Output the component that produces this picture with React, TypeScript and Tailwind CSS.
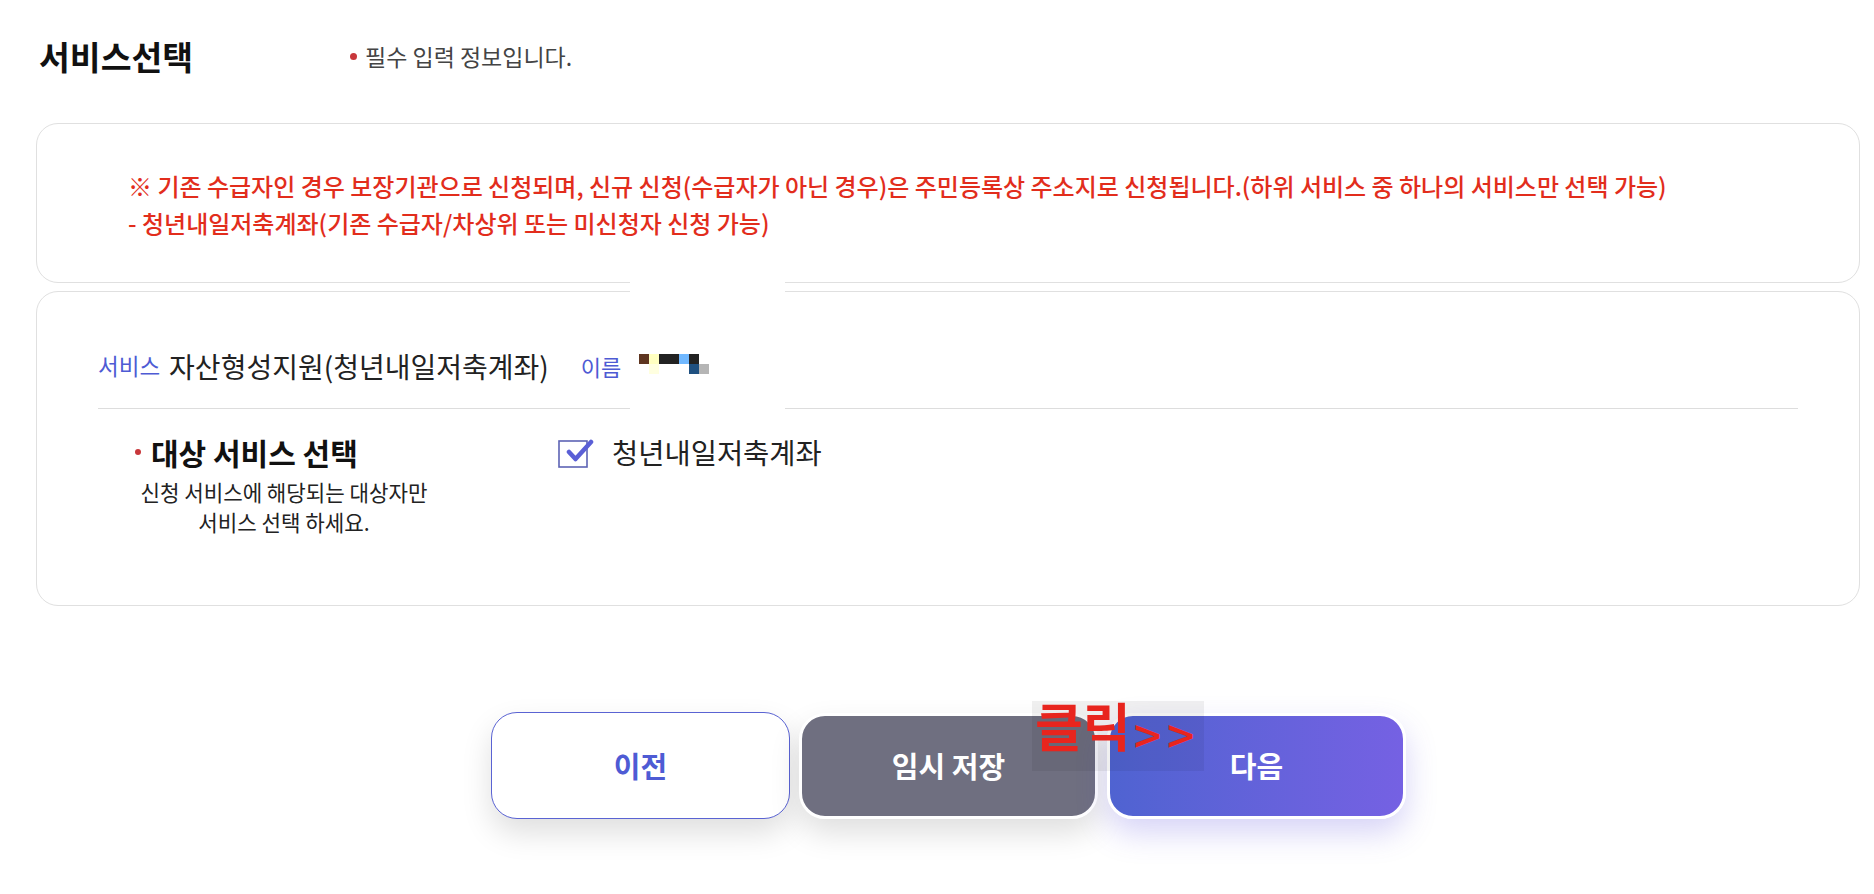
import React from 'react';

const pixels: { x: number; y: number; c: string }[] = [
  { x: 0, y: 0, c: '#5e3520' },
  { x: 10, y: 0, c: '#ffffc0' },
  { x: 20, y: 0, c: '#222222' },
  { x: 30, y: 0, c: '#222222' },
  { x: 40, y: 0, c: '#70b8ff' },
  { x: 50, y: 0, c: '#222222' },
  { x: 10, y: 10, c: '#ffffe0' },
  { x: 50, y: 10, c: '#1f5080' },
  { x: 60, y: 10, c: '#b5b5b5' },
];

const CheckIcon: React.FC = () => (
  <svg width="36" height="32" viewBox="0 0 36 32" className="shrink-0">
    <rect x="1" y="5" width="28" height="26" fill="white" stroke="#5d63b5" strokeWidth="1.6" />
    <path d="M11 16 L17.5 23 L33 6" fill="none" stroke="#5a5fd6" strokeWidth="4.5" strokeLinecap="round" strokeLinejoin="round" />
  </svg>
);

const App: React.FC = () => {
  return (
    <div className="relative w-[1874px] h-[894px] bg-white overflow-hidden font-['Noto_Sans_CJK_KR',sans-serif] text-[#222]">
      {/* header */}
      <div className="flex items-center h-[40px] mt-[36px] pl-[39px]">
        <h2 className="w-[311px] text-[33.5px] font-bold text-[#111]">서비스선택</h2>
        <span className="w-[7px] h-[7px] rounded-full bg-[#c8373b] mr-[8px]" />
        <span className="text-[23px] text-[#444]">필수 입력 정보입니다.</span>
      </div>

      {/* notice card */}
      <div className="ml-[36px] mt-[47px] w-[1824px] h-[160px] border border-[#e0e0e0] rounded-[22px] pl-[91px] pt-[43px] text-[#e22d1c] text-[24px] font-medium leading-[37px]">
        <p>※ 기존 수급자인 경우 보장기관으로 신청되며, 신규 신청(수급자가 아닌 경우)은 주민등록상 주소지로 신청됩니다.(하위 서비스 중 하나의 서비스만 선택 가능)</p>
        <p>- 청년내일저축계좌(기존 수급자/차상위 또는 미신청자 신청 가능)</p>
      </div>

      {/* service card */}
      <div className="ml-[36px] mt-[8px] w-[1824px] h-[315px] border border-[#e0e0e0] rounded-[22px] px-[61px] pt-[54px]">
        <div className="flex items-center h-[40px]">
          <span className="text-[22.5px] text-[#4e5bd4]">서비스</span>
          <span className="ml-[9px] text-[28px] text-[#222]">자산형성지원(청년내일저축계좌)</span>
          <span className="ml-[32px] text-[22px] text-[#4e5bd4]">이름</span>
          <span className="relative z-10 ml-[18px] w-[70px] h-[20px] mt-[-4px]">
            {pixels.map((p, i) => (
              <span
                key={i}
                className="absolute w-[10px] h-[10px]"
                style={{ left: p.x, top: p.y, background: p.c }}
              />
            ))}
          </span>
        </div>
        <div className="mt-[22px] h-px bg-[#dddddd]" />
        <div className="flex">
          <div className="w-[460px]">
            <div className="flex items-center mt-[25px] pl-[37px] h-[36px]">
              <span className="w-[6px] h-[6px] rounded-full bg-[#c8373b] mr-[10px]" />
              <span className="text-[30px] font-bold text-[#111]">대상 서비스 선택</span>
            </div>
            <p className="w-[372px] mt-[7px] text-center text-[21.2px] leading-[30px] text-[#222]">
              신청 서비스에 해당되는 대상자만
              <br />
              서비스 선택 하세요.
            </p>
          </div>
          <div className="flex items-center mt-[25px] h-[36px]">
            <CheckIcon />
            <span className="ml-[18px] text-[28.5px] text-[#222]">청년내일저축계좌</span>
          </div>
        </div>
      </div>

      {/* buttons */}
      <div className="flex items-end gap-[9px] pl-[491px] mt-[106px]">
        <button className="w-[299px] h-[107px] rounded-[26px] border border-[#5a63d3] bg-white text-[#4e5bd4] text-[29px] font-bold shadow-[0_14px_30px_rgba(0,0,0,0.13)]">
          이전
        </button>
        <button className="w-[299px] h-[106px] rounded-[26px] border-[3px] border-white bg-[#6f6f80] text-white text-[29px] font-bold shadow-[0_14px_30px_rgba(0,0,0,0.13)]">
          임시 저장
        </button>
        <button className="w-[299px] h-[106px] rounded-[26px] border-[3px] border-white bg-gradient-to-r from-[#4f63d1] to-[#7561e3] text-white text-[29px] font-bold shadow-[0_14px_30px_rgba(95,85,225,0.25)]">
          다음
        </button>
      </div>

      {/* annotation overlay */}
      <div className="absolute left-[1032px] top-[701px] w-[172px] h-[70px] bg-[rgba(0,0,0,0.06)] flex items-start whitespace-nowrap">
        <span className="shrink-0 ml-[3px] mt-[-8px] text-[52px] leading-[64px] font-bold text-[#e8251e]">클릭</span>
        <span className="shrink-0 ml-[3px] mt-[0px] text-[48px] leading-[64px] font-medium tracking-[6px] text-[#e8251e]">&gt;&gt;</span>
      </div>

      {/* redaction block */}
      <div className="absolute left-[630px] top-[282px] w-[155px] h-[127px] bg-white" />
    </div>
  );
};

export default App;
